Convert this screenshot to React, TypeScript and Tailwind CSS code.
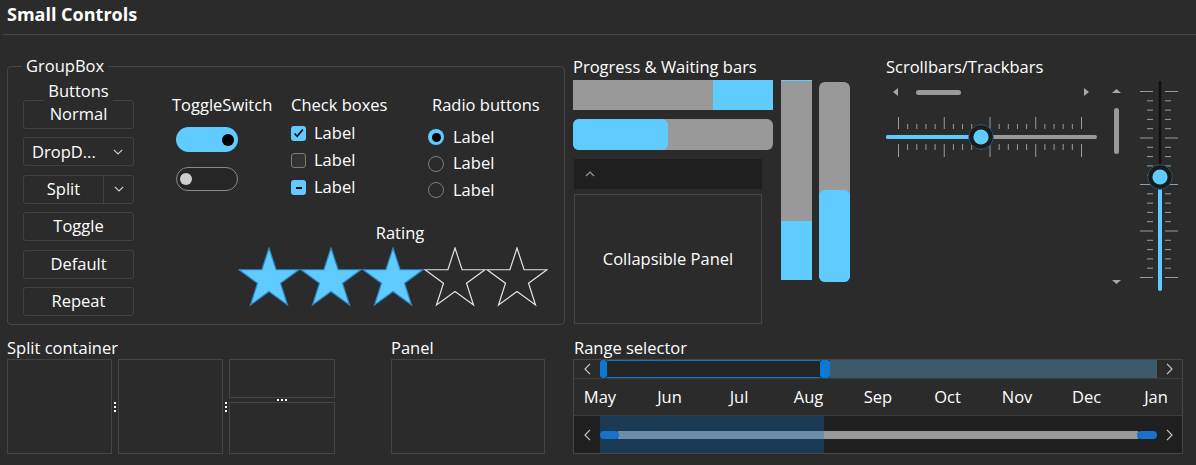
import React from "react";

const BLUE = "#5fcbff";

function Star({ filled }: { filled: boolean }) {
  const pts = Array.from({ length: 10 }, (_, i) => {
    const a = ((-90 + 36 * i) * Math.PI) / 180;
    const r = i % 2 === 0 ? 31.5 : 12.1;
    return `${(31 + r * Math.cos(a)).toFixed(2)},${(32.5 + r * Math.sin(a)).toFixed(2)}`;
  }).join(" ");
  return (
    <svg width="62" height="60" viewBox="0 0 62 60">
      <polygon
        points={pts}
        fill={filled ? BLUE : "none"}
        stroke={filled ? "#2f86c9" : "#e4e4e4"}
        strokeWidth="1.2"
      />
    </svg>
  );
}

function ChevronDown() {
  return (
    <svg width="10" height="6" viewBox="0 0 10 6">
      <polyline points="0.8,0.8 5,5 9.2,0.8" fill="none" stroke="#cfcfcf" strokeWidth="1.2" />
    </svg>
  );
}

function ChevronSide({ dir }: { dir: "l" | "r" }) {
  return (
    <svg width="7" height="12" viewBox="0 0 7 12">
      <polyline
        points={dir === "l" ? "6,0.8 1,6 6,11.2" : "1,0.8 6,6 1,11.2"}
        fill="none"
        stroke="#c8c8c8"
        strokeWidth="1.2"
      />
    </svg>
  );
}

function Btn({ children }: { children: React.ReactNode }) {
  return (
    <div className="h-[29px] w-full border border-[#414141] rounded-[3px] flex items-center justify-center">
      {children}
    </div>
  );
}

function Dots({ vertical }: { vertical: boolean }) {
  return (
    <div className={vertical ? "flex flex-col gap-[2px]" : "flex flex-row gap-[2px]"}>
      <span className="w-[2px] h-[2px] bg-white" />
      <span className="w-[2px] h-[2px] bg-white" />
      <span className="w-[2px] h-[2px] bg-white" />
    </div>
  );
}

function HTrackbar() {
  const ticks = Array.from({ length: 21 }, (_, k) => k);
  return (
    <svg width="211" height="44" viewBox="0 0 211 44">
      {ticks.map((k) => {
        const x = 12 + 9.15 * k + 0.5;
        const major = k % 5 === 0;
        return (
          <g key={k} stroke="#9c9c9c" strokeWidth="1">
            <line x1={x} x2={x} y1={major ? 2 : 9} y2={14} />
            <line x1={x} x2={x} y1={29} y2={major ? 42 : 35} />
          </g>
        );
      })}
      <line x1="2" x2="209" y1="22" y2="22" stroke="#9a9a9a" strokeWidth="4" strokeLinecap="round" />
      <line x1="2" x2="95" y1="22" y2="22" stroke={BLUE} strokeWidth="4" strokeLinecap="round" />
      <circle cx="95" cy="22" r="12.3" fill="#1c1c1c" stroke="#2c5f80" strokeWidth="0.8" />
      <circle cx="95" cy="22" r="7.6" fill={BLUE} />
    </svg>
  );
}

function VTrackbar() {
  const ticks = Array.from({ length: 21 }, (_, k) => k);
  return (
    <svg width="40" height="212" viewBox="0 0 40 212">
      {ticks.map((k) => {
        const y = 11 + 9.3 * k + 0.5;
        const major = k % 5 === 0;
        return (
          <g key={k} stroke="#9c9c9c" strokeWidth="1">
            <line x1={major ? 1 : 8} x2={14} y1={y} y2={y} />
            <line x1={26} x2={major ? 39 : 32} y1={y} y2={y} />
          </g>
        );
      })}
      <line x1="21" x2="21" y1="1" y2="97" stroke="#111111" strokeWidth="2.5" />
      <line x1="21" x2="21" y1="97" y2="209" stroke={BLUE} strokeWidth="4" strokeLinecap="round" />
      <circle cx="21" cy="97" r="12.3" fill="#1c1c1c" stroke="#2c5f80" strokeWidth="0.8" />
      <circle cx="21" cy="97" r="7.6" fill={BLUE} />
    </svg>
  );
}

const MONTHS = ["May", "Jun", "Jul", "Aug", "Sep", "Oct", "Nov", "Dec", "Jan"];

export default function App() {
  return (
    <div className="w-[1196px] h-[465px] overflow-hidden bg-[#2b2b2b] text-white font-['Open_Sans',sans-serif] text-[16.5px]">
      {/* Header */}
      <div className="h-[35px] ml-[3px] border-b border-[#474747] pl-[4px]">
        <div className="text-[18px] font-bold leading-[24px] pt-[2px]">Small Controls</div>
      </div>

      {/* Top row */}
      <div className="flex h-[290px] pl-[7px]">
        {/* GroupBox */}
        <fieldset className="mt-[21px] w-[558px] h-[269px] border border-[#464646] rounded-[4px] min-w-0">
          <legend className="ml-[14px] px-[4px] leading-[20px]">GroupBox</legend>
          <div className="flex pl-[15px] pt-[4px]">
            {/* Buttons */}
            <div className="w-[111px] flex flex-col">
              <div className="relative z-10 self-center bg-[#2b2b2b] px-[4px] leading-[21px]">Buttons</div>
              <div className="flex flex-col gap-[8.4px] -mt-[1px]">
                <Btn>Normal</Btn>
                <div className="h-[29px] w-full border border-[#414141] rounded-[3px] flex items-center pl-[8px] pr-[10px] justify-between">
                  <span>DropD...</span>
                  <ChevronDown />
                </div>
                <div className="h-[29px] w-full border border-[#414141] rounded-[3px] flex">
                  <div className="w-[80px] flex items-center justify-center border-r border-[#414141]">Split</div>
                  <div className="flex-1 flex items-center justify-center">
                    <ChevronDown />
                  </div>
                </div>
                <Btn>Toggle</Btn>
                <Btn>Default</Btn>
                <Btn>Repeat</Btn>
              </div>
            </div>

            {/* Right content */}
            <div className="ml-[38px] w-[377px] flex flex-col">
              <div className="flex h-[128px] mt-[15px]">
                {/* Toggle switches */}
                <div className="w-[119px] flex flex-col">
                  <div className="leading-[20px]">ToggleSwitch</div>
                  <div className="mt-[12px] ml-[4px] w-[62px] h-[25px] rounded-full bg-[#5fcbff] flex items-center justify-end pr-[4px]">
                    <span className="w-[12px] h-[12px] rounded-full bg-black" />
                  </div>
                  <div className="mt-[15px] ml-[4px] w-[62px] h-[24px] rounded-full border-[1.5px] border-[#8a8a8a] bg-[#262626] flex items-center pl-[3px]">
                    <span className="w-[12px] h-[12px] rounded-full bg-[#cfcfcf]" />
                  </div>
                </div>

                {/* Check boxes */}
                <div className="w-[137px] flex flex-col">
                  <div className="leading-[20px]">Check boxes</div>
                  <div className="mt-[5px] flex flex-col">
                    <div className="h-[27px] flex items-center gap-[8px]">
                      <span className="w-[15px] h-[15px] rounded-[3px] bg-[#5fcbff] flex items-center justify-center">
                        <svg width="13" height="13" viewBox="0 0 13 13">
                          <polyline points="2.5,6.5 5.2,9.2 10.8,2.6" fill="none" stroke="#000" strokeWidth="1.6" />
                        </svg>
                      </span>
                      <span>Label</span>
                    </div>
                    <div className="h-[27px] flex items-center gap-[8px]">
                      <span className="w-[15px] h-[15px] rounded-[3px] border border-[#7c7c7c] bg-[#333333]" />
                      <span>Label</span>
                    </div>
                    <div className="h-[27px] flex items-center gap-[8px]">
                      <span className="w-[15px] h-[15px] rounded-[3px] bg-[#5fcbff] flex items-center justify-center">
                        <span className="w-[6px] h-[2px] bg-black" />
                      </span>
                      <span>Label</span>
                    </div>
                  </div>
                </div>

                {/* Radio buttons */}
                <div className="flex flex-col">
                  <div className="leading-[20px] pl-[4px]">Radio buttons</div>
                  <div className="mt-[9px] flex flex-col">
                    <div className="h-[26.5px] flex items-center gap-[9px]">
                      <span className="w-[16px] h-[16px] rounded-full bg-[#5fcbff] flex items-center justify-center">
                        <span className="w-[9px] h-[9px] rounded-full bg-black" />
                      </span>
                      <span>Label</span>
                    </div>
                    <div className="h-[26.5px] flex items-center gap-[9px]">
                      <span className="w-[16px] h-[16px] rounded-full border-[1.5px] border-[#7e7e7e]" />
                      <span>Label</span>
                    </div>
                    <div className="h-[26.5px] flex items-center gap-[9px]">
                      <span className="w-[16px] h-[16px] rounded-full border-[1.5px] border-[#7e7e7e]" />
                      <span>Label</span>
                    </div>
                  </div>
                </div>
              </div>

              {/* Rating */}
              <div className="ml-[66px] w-[310px] flex flex-col items-center">
                <div className="leading-[20px] pl-[14px]">Rating</div>
                <div className="mt-[4px] flex">
                  <Star filled />
                  <Star filled />
                  <Star filled />
                  <Star filled={false} />
                  <Star filled={false} />
                </div>
              </div>
            </div>
          </div>
        </fieldset>

        {/* Progress & waiting bars */}
        <div className="ml-[8px] w-[277px] pt-[22px]">
          <div className="leading-[20px] whitespace-nowrap">Progress &amp; Waiting bars</div>
          <div className="flex">
            <div className="w-[200px] flex flex-col">
              <div className="mt-[3px] h-[30px] bg-[#999999] flex justify-end">
                <div className="w-[60px] h-full bg-[#5fcbff]" />
              </div>
              <div className="mt-[9px] h-[31px] rounded-[6px] bg-[#999999] flex">
                <div className="w-[95px] h-full rounded-[6px] bg-[#5fcbff]" />
              </div>
              <div className="mt-[9px] ml-[1px] w-[188px] h-[30px] bg-[#1f1f1f] flex items-center pl-[11px]">
                <svg width="10" height="6" viewBox="0 0 10 6">
                  <polyline points="1,5 5,1 9,5" fill="none" stroke="#9a9a9a" strokeWidth="1.2" />
                </svg>
              </div>
              <div className="mt-[5px] ml-[1px] w-[188px] h-[130px] border border-[#454545] flex items-center justify-center">
                Collapsible Panel
              </div>
            </div>
            <div className="ml-[8px] mt-[3px] w-[31px] h-[200px] bg-[#999999] flex flex-col justify-between border-t-[1.5px] border-[#5fcbff]">
              <div />
              <div className="h-[59px] bg-[#5fcbff]" />
            </div>
            <div className="ml-[7px] mt-[5px] w-[31px] h-[200px] rounded-[6px] bg-[#999999] flex flex-col justify-end">
              <div className="h-[92px] rounded-[6px] bg-[#5fcbff]" />
            </div>
          </div>
        </div>

        {/* Scrollbars / Trackbars */}
        <div className="ml-[36px] pt-[22px]">
          <div className="leading-[20px]">Scrollbars/Trackbars</div>
          <div className="flex">
            <div className="w-[211px] flex flex-col">
              <div className="mt-[9px] h-[12px] flex items-center pl-[7px] pr-[8px]">
                <svg width="5" height="8" viewBox="0 0 5 8">
                  <polygon points="5,0 0,4 5,8" fill="#a8a8a8" />
                </svg>
                <div className="ml-[18px] w-[45px] h-[5px] rounded-full bg-[#9a9a9a]" />
                <div className="flex-1" />
                <svg width="5" height="8" viewBox="0 0 5 8">
                  <polygon points="0,0 5,4 0,8" fill="#a8a8a8" />
                </svg>
              </div>
              <div className="mt-[17px]">
                <HTrackbar />
              </div>
            </div>
            <div className="ml-[15px] w-[9px] flex flex-col items-center">
              <svg className="mt-[12px]" width="9" height="4" viewBox="0 0 9 4">
                <polygon points="0,4 4.5,0 9,4" fill="#a8a8a8" />
              </svg>
              <div className="mt-[15px] w-[5px] h-[46px] rounded-full bg-[#9a9a9a]" />
              <svg className="mt-[126px]" width="9" height="4" viewBox="0 0 9 4">
                <polygon points="0,0 4.5,4 9,0" fill="#a8a8a8" />
              </svg>
            </div>
            <div className="ml-[18px] mt-[3px]">
              <VTrackbar />
            </div>
          </div>
        </div>
      </div>

      {/* Bottom row */}
      <div className="flex pl-[7px] mt-[13px]">
        {/* Split container */}
        <div className="w-[328px] flex flex-col">
          <div className="leading-[20px]">Split container</div>
          <div className="mt-[1px] h-[95px] flex">
            <div className="w-[105px] border border-[#454545]" />
            <div className="w-[6px] flex items-center justify-center">
              <Dots vertical />
            </div>
            <div className="w-[105px] border border-[#454545]" />
            <div className="w-[6px] flex items-center justify-center">
              <Dots vertical />
            </div>
            <div className="w-[106px] flex flex-col">
              <div className="h-[39px] border border-[#454545]" />
              <div className="h-[4px] flex items-center justify-center">
                <Dots vertical={false} />
              </div>
              <div className="flex-1 border border-[#454545]" />
            </div>
          </div>
        </div>

        {/* Panel */}
        <div className="ml-[56px] w-[154px] flex flex-col">
          <div className="leading-[20px]">Panel</div>
          <div className="mt-[1px] h-[95px] border border-[#454545]" />
        </div>

        {/* Range selector */}
        <div className="ml-[28px] w-[610px] flex flex-col">
          <div className="leading-[20px] pl-[1px]">Range selector</div>
          <div className="mt-[1px] h-[95px] border border-[#454545] flex flex-col">
            {/* Row 1 */}
            <div className="h-[19px] border-b border-[#3c3c3c] flex">
              <div className="w-[26px] flex items-center justify-center">
                <ChevronSide dir="l" />
              </div>
              <div className="w-[230px] flex">
                <div className="w-[7px] rounded-[3px] bg-[#0b78d6]" />
                <div className="flex-1 border-y-[1.5px] border-[#0b78d6] bg-[#252525]" />
                <div className="w-[10px] rounded-[3px] bg-[#0b78d6]" />
              </div>
              <div className="w-[327px] bg-[#3d5a6b]" />
              <div className="flex-1 flex items-center justify-center">
                <ChevronSide dir="r" />
              </div>
            </div>
            {/* Row 2 */}
            <div className="h-[37px] border-b border-[#3c3c3c] flex items-center pl-[26px]">
              <div className="w-[556px] flex justify-between">
                {MONTHS.map((m) => (
                  <div key={m} className="w-0 flex justify-center">
                    <span className="whitespace-nowrap">{m}</span>
                  </div>
                ))}
              </div>
            </div>
            {/* Row 3 */}
            <div className="flex-1 bg-[#1f1f1f] flex">
              <div className="w-[26px] flex items-center justify-center">
                <ChevronSide dir="l" />
              </div>
              <div className="w-[557px] grid">
                <div className="[grid-area:1/1] flex">
                  <div className="w-[224px] bg-[#1a3a56]" />
                </div>
                <div className="[grid-area:1/1] flex items-center">
                  <div className="w-[19px] h-[8px] rounded-full bg-[#1872cc] -mr-[1px] z-10" />
                  <div className="flex-1 h-[8px] flex">
                    <div className="w-[206px] bg-[#6c8eaa]" />
                    <div className="flex-1 bg-[#9a9a9a]" />
                  </div>
                  <div className="w-[20px] h-[8px] rounded-full bg-[#1872cc] -ml-[1px] z-10" />
                </div>
              </div>
              <div className="flex-1 flex items-center justify-center">
                <ChevronSide dir="r" />
              </div>
            </div>
          </div>
        </div>
      </div>
    </div>
  );
}
